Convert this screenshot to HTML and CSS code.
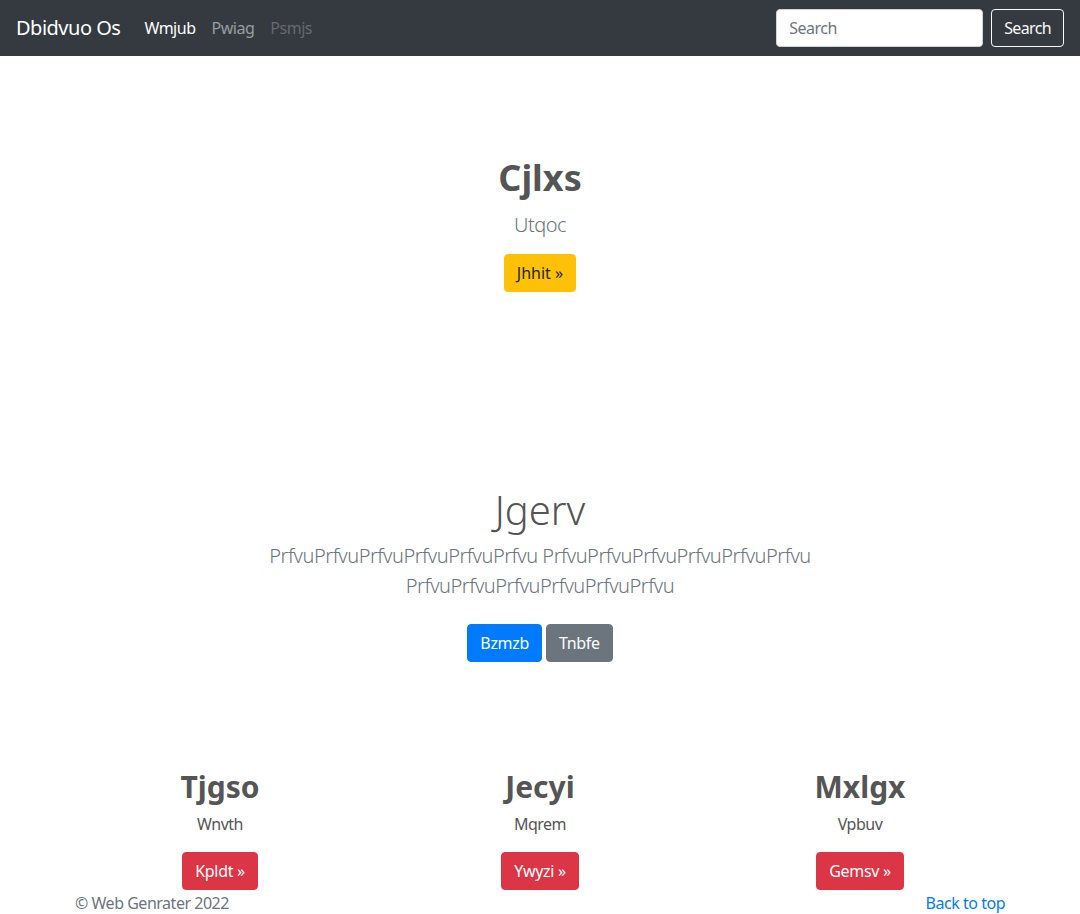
FILE: index.html
```html
<!DOCTYPE html>
<html lang="en">
<head>
<meta charset="utf-8">
<title>Dbidvuo Os</title>
<link rel="stylesheet" href="styles.css">
</head>
<body>
<nav class="navbar">
  <a class="brand" href="#">Dbidvuo Os</a>
  <ul class="nav-links">
    <li><a class="nav-link active" href="#">Wmjub</a></li>
    <li><a class="nav-link" href="#">Pwiag</a></li>
    <li><a class="nav-link disabled" href="#">Psmjs</a></li>
  </ul>
  <form class="search-form">
    <input class="search-input" type="text" placeholder="Search">
    <button class="btn btn-outline-light" type="button">Search</button>
  </form>
</nav>

<section class="hero">
  <h1 class="hero-title">Cjlxs</h1>
  <p class="lead hero-lead">Utqoc</p>
  <a class="btn btn-warning" href="#">Jhhit &raquo;</a>
</section>

<section class="jumbo">
  <h1 class="jumbo-title">Jgerv</h1>
  <p class="lead jumbo-lead">PrfvuPrfvuPrfvuPrfvuPrfvuPrfvu PrfvuPrfvuPrfvuPrfvuPrfvuPrfvu PrfvuPrfvuPrfvuPrfvuPrfvuPrfvu</p>
  <p class="jumbo-actions">
    <a class="btn btn-primary" href="#">Bzmzb</a>
    <a class="btn btn-secondary" href="#">Tnbfe</a>
  </p>
</section>

<section class="features">
  <div class="feature">
    <h2 class="feature-title">Tjgso</h2>
    <p class="feature-text">Wnvth</p>
    <a class="btn btn-danger" href="#">Kpldt &raquo;</a>
  </div>
  <div class="feature">
    <h2 class="feature-title">Jecyi</h2>
    <p class="feature-text">Mqrem</p>
    <a class="btn btn-danger" href="#">Ywyzi &raquo;</a>
  </div>
  <div class="feature">
    <h2 class="feature-title">Mxlgx</h2>
    <p class="feature-text">Vpbuv</p>
    <a class="btn btn-danger" href="#">Gemsv &raquo;</a>
  </div>
</section>

<footer class="footer">
  <p class="copyright">&copy; Web Genrater 2022</p>
  <a class="back-top" href="#">Back to top</a>
</footer>
</body>
</html>
```

FILE: styles.css
```css
* { box-sizing: border-box; }

html, body {
  margin: 0;
  padding: 0;
}

body {
  font-family: "Noto Sans", "Open Sans", sans-serif;
  font-size: 16px;
  line-height: 1.5;
  letter-spacing: -0.03em;
  color: #555;
  background: #fff;
}

a { text-decoration: none; }

.navbar {
  height: 56px;
  background: #343a40;
  display: flex;
  align-items: center;
  padding: 0 16px;
}

.brand {
  color: #fff;
  font-size: 20px;
  line-height: 30px;
  margin-right: 16px;
  letter-spacing: -0.025em;
}

.nav-links {
  list-style: none;
  margin: 0;
  padding: 0;
  display: flex;
  flex: 1;
}

.nav-link {
  display: block;
  padding: 8px;
  color: rgba(255,255,255,.5);
}

.nav-link.active { color: #fff; }
.nav-link.disabled { color: rgba(255,255,255,.25); }

.search-form {
  display: flex;
  align-items: center;
  gap: 8px;
}

.search-input {
  width: 207px;
  height: 38px;
  padding: 6px 12px;
  font-family: inherit;
  font-size: 16px;
  letter-spacing: -0.03em;
  color: #495057;
  background: #fff;
  border: 1px solid #ced4da;
  border-radius: 4px;
}

.search-input::placeholder { color: #6c757d; }

.btn {
  display: inline-block;
  font-family: inherit;
  font-size: 16px;
  line-height: 24px;
  letter-spacing: -0.02em;
  padding: 6px 12px;
  border: 1px solid transparent;
  border-radius: 4px;
  text-align: center;
  vertical-align: middle;
  cursor: pointer;
}

.btn-outline-light {
  color: #f8f9fa;
  border-color: #f8f9fa;
  background: transparent;
  letter-spacing: -0.04em;
}

.btn-warning { background: #ffc107; border-color: #ffc107; color: #212529; letter-spacing: 0; }
.btn-primary { background: #007bff; border-color: #007bff; color: #fff; }
.btn-secondary { background: #6c757d; border-color: #6c757d; color: #fff; }
.btn-danger { background: #dc3545; border-color: #dc3545; color: #fff; }

.lead {
  font-size: 20px;
  font-weight: 300;
  line-height: 30px;
  color: #6c757d;
}

.hero {
  text-align: center;
  padding-top: 98px;
}

.hero-title {
  font-size: 36px;
  font-weight: 700;
  line-height: 48px;
  letter-spacing: 0;
  margin: 0 0 8px;
}

.hero-lead {
  margin: 0 0 14px;
}

.jumbo {
  text-align: center;
  padding-top: 194px;
  max-width: 640px;
  margin: 0 auto;
}

.jumbo-title {
  font-size: 40px;
  font-weight: 300;
  line-height: 48px;
  letter-spacing: 0;
  margin: 0 0 7px;
}

.jumbo-lead {
  margin: 0 0 16px;
}

.jumbo-actions {
  margin: 0;
  font-size: 0;
  display: flex;
  justify-content: center;
  gap: 4px;
  padding-top: 7px;
}

.features {
  max-width: 960px;
  margin: 0 auto;
  padding-top: 106px;
  display: grid;
  grid-template-columns: repeat(3, 1fr);
  text-align: center;
}

.feature { padding: 0 15px; }

.feature-title {
  font-size: 30px;
  font-weight: 700;
  line-height: 38px;
  letter-spacing: 0;
  margin: 0 0 6px;
}

.feature-text {
  margin: 0 0 16px;
}

.footer {
  max-width: 960px;
  margin: 0 auto;
  padding: 1px 15px 0;
  display: flex;
  justify-content: space-between;
  color: #6c757d;
}

.copyright { margin: 0; }

.back-top { color: #007bff; }
```
